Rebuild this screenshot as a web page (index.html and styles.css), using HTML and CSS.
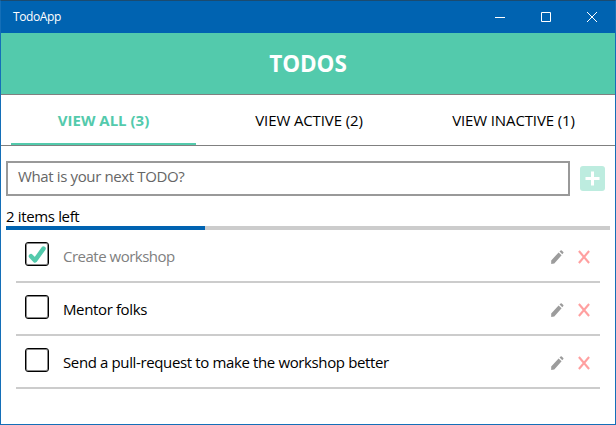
FILE: index.html
```html
<!DOCTYPE html>
<html lang="en">
<head>
<meta charset="utf-8">
<title>TodoApp</title>
<link rel="stylesheet" href="styles.css">
</head>
<body>
<svg width="0" height="0" class="defs">
  <symbol id="pencil" viewBox="0 0 13 14"><path d="M.2 14V10.6L7.6 2.4L10.6 5.2L3.3 13.6ZM8.5 1.5L9.6.5Q10.2 0 10.8.5L12.3 1.9Q12.8 2.5 12.3 3.1L11.3 4.3Z"/></symbol>
  <symbol id="cross" viewBox="0 0 12 14"><path d="M.9 1L11.1 13M11.1 1L.9 13" fill="none" stroke="currentColor" stroke-width="2.1"/></symbol>
</svg>
<div class="window">
  <div class="titlebar">
    <span class="app-name">TodoApp</span>
    <svg class="controls" width="138" height="32" viewBox="0 0 138 32" fill="none" stroke="#fff"><path d="M18 16.5H28M64.5 11.5H73.5V20.5H64.5Z"/><path d="M110 11L120 21M120 11L110 21"/></svg>
  </div>
  <header class="header"><h1 class="heading">TODOS</h1></header>
  <nav class="tabs">
    <a class="tab tab-active">VIEW ALL (3)</a>
    <a class="tab">VIEW ACTIVE (2)</a>
    <a class="tab">VIEW INACTIVE (1)</a>
  </nav>
  <main class="content">
    <div class="entry">
      <div class="field">What is your next TODO?</div>
      <button class="add"><svg width="25" height="25" viewBox="0 0 25 25"><path d="M12.5 5.5V19.5M5.5 12.5H19.5" stroke="#fff" stroke-width="3"/></svg></button>
    </div>
    <div class="remaining">2 items left</div>
    <div class="progress"><div class="progress-fill"></div></div>
    <ul class="list">
      <li class="item">
        <span class="box"><svg width="20" height="20" viewBox="0 0 20 20"><path d="M4 12.2L8 16.4L16.5 4.6" fill="none" stroke="#53caac" stroke-width="4.5" stroke-linecap="round" stroke-linejoin="round"/></svg></span>
        <span class="label label-done">Create workshop</span>
        <svg class="edit"><use href="#pencil"/></svg><svg class="remove"><use href="#cross"/></svg>
      </li>
      <li class="item">
        <span class="box"></span>
        <span class="label">Mentor folks</span>
        <svg class="edit"><use href="#pencil"/></svg><svg class="remove"><use href="#cross"/></svg>
      </li>
      <li class="item">
        <span class="box"></span>
        <span class="label">Send a pull-request to make the workshop better</span>
        <svg class="edit"><use href="#pencil"/></svg><svg class="remove"><use href="#cross"/></svg>
      </li>
    </ul>
  </main>
</div>
</body>
</html>
```
FILE: styles.css
```css
* { box-sizing: border-box; }
body { margin: 0; font: 15px/20px "Open Sans", "Noto Sans", sans-serif; letter-spacing: -0.37px; color: #000; }
.defs { position: absolute; }
.window { height: 425px; border: 1px solid #146fb8; border-top-color: #1b4b70; background: #fff; overflow: hidden; }
.titlebar { display: flex; justify-content: space-between; height: 32px; background: #0063b1; color: #fff; }
.app-name { padding-left: 12px; font-size: 12px; line-height: 31px; letter-spacing: -0.4px; font-weight: 500; }
.header { height: 62px; background: #53caac; border-bottom: 1px solid #808080; }
.heading { margin: 0; text-align: center; color: #fff; font-size: 22.5px; line-height: 62px; font-weight: 700; letter-spacing: -0.1px; }
.tabs { display: grid; grid-template-columns: repeat(3, 185px); justify-content: space-between; padding: 0 10px; height: 51px; border-bottom: 1px solid #808080; letter-spacing: -0.12px; }
.tab { text-align: center; line-height: 51px; height: 50px; padding-left: 2px; }
.tab-active { color: #53caac; font-weight: 700; border-bottom: 2px solid #53caac; letter-spacing: 0; padding-left: 0; }
.content { padding: 15px 5px 0; }
.entry { display: flex; align-items: center; gap: 10px; }
.field { width: 564px; height: 35px; border: 2px solid #999; padding-left: 10px; line-height: 26px; color: #666; }
.add { width: 25px; height: 25px; padding: 0; border: 0; border-radius: 3px; background: #bdecdf; }
.add svg { display: block; }
.remaining { height: 30px; padding-top: 10px; letter-spacing: -0.35px; }
.progress { height: 4px; width: 604px; background: #ccc; }
.progress-fill { width: 199px; height: 4px; background: #0063b1; }
.list { list-style: none; margin: 0 10px; padding: 0; }
.item { display: flex; align-items: flex-start; width: 584px; height: 53px; padding: 12px 10px 0 9px; border-bottom: 2px solid #ccc; }
.box { width: 24px; height: 24px; padding: 1px; border: 1px solid #000; border-radius: 3px; box-shadow: inset 0 0 0 1px #888; }
.box svg { display: block; }
.label { flex: 1; margin-left: 14px; padding-top: 4px; }
.label-done { color: #808080; letter-spacing: -0.5px; }
.edit { width: 13px; height: 14px; margin: 8px 14px 0 0; fill: #9c9c9c; }
.remove { width: 12px; height: 14px; margin-top: 8px; color: #ffa0a0; }
```
